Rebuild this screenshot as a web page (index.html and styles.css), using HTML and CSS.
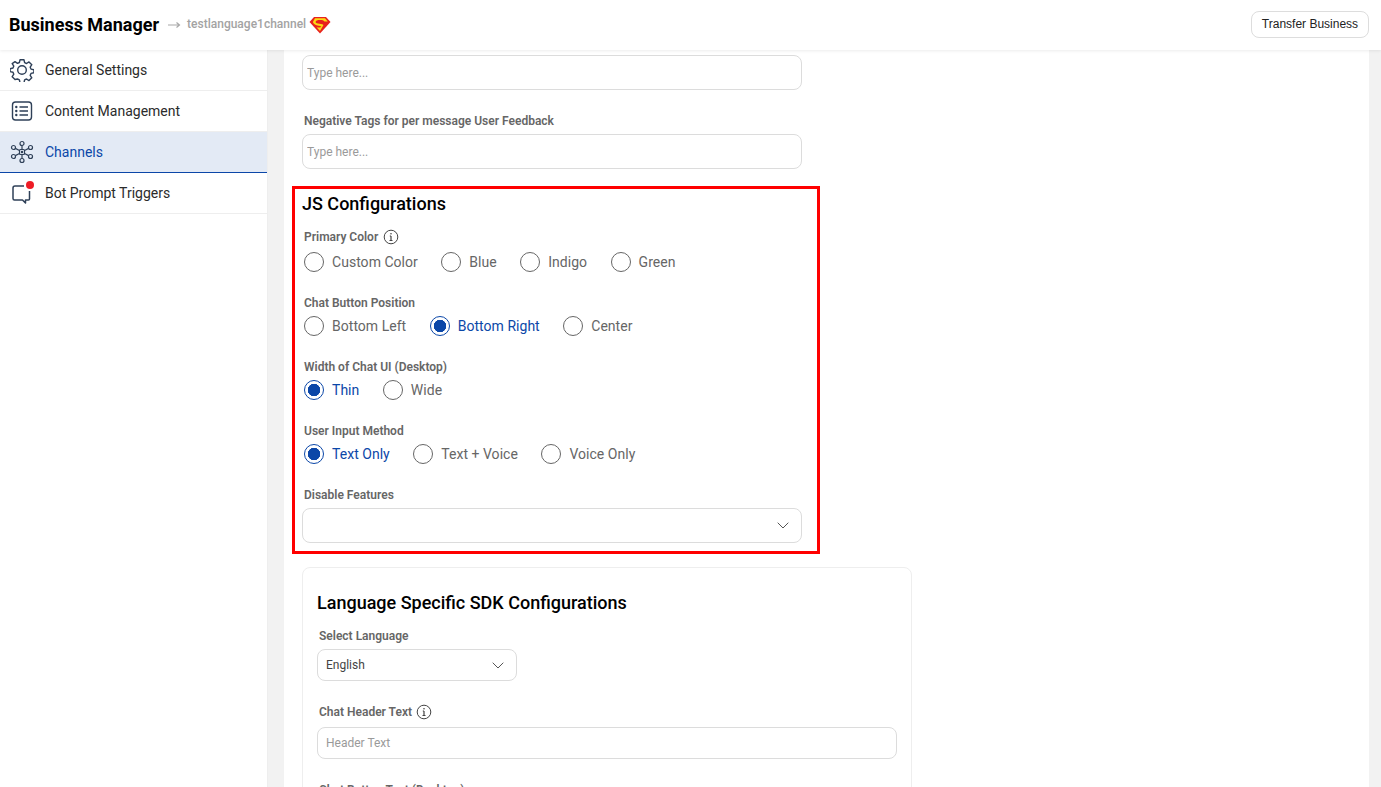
FILE: index.html
```html
<!DOCTYPE html>
<html lang="en">
<head>
    <meta charset="UTF-8">
    <meta name="viewport" content="width=device-width, initial-scale=1.0">
    <title>Business Manager</title>
    <link rel="stylesheet" href="styles.css">
</head>
<body>
    <header class="topbar">
        <div class="crumbs">
            <h1>Business Manager</h1>
            <svg class="arrow" width="14" height="8" viewBox="0 0 14 8" fill="none" stroke="#a8a8a8" stroke-width="1.2"><path d="M1 4h11.5M9.5 1.5 12.5 4l-3 2.5"/></svg>
            <span class="crumb-name">testlanguage1channel</span>
            <svg class="logo" width="22" height="18" viewBox="0 0 22 18">
                <path d="M5 1h12l4.5 5L11 17.5.5 6z" fill="#e8211d"/>
                <path d="M6 2.2h10l2.8 3.2h-3.4c-.8-1-2-1.4-4.400-1.400-2.400 0-4.400.5-4.400 1.900 0 2.600 7.800 1 7.800 3.300L11 15 7.500 11.200c1.700.5 4.500.6 4.800-.4.300-1.100-7.700-1-8.400-4.800z" fill="#fbd914"/>
            </svg>
        </div>
        <button class="transfer" type="button">Transfer Business</button>
    </header>

    <div class="layout">
        <nav class="sidebar">
            <a class="nav-item">
                <svg width="24" height="24" viewBox="0 0 24 24" fill="none" stroke="#2f4058" stroke-width="1.4" stroke-linejoin="round"><path d="M10 1.800h4l.6 2.900 1.900.8 2.500-1.600 2.800 2.800-1.600 2.500.8 1.900 2.900.7v2.900l-2.900.7-.8 1.900 1.600 2.500-2.800 2.800-2.500-1.600-1.900.8-.6 2.900h-4l-.6-2.900-1.900-.8L5 21.500l-2.800-2.800 1.600-2.500-.8-1.900-2.900-.7v-2.900l2.900-.7.8-1.900-1.600-2.500L5 3.700l2.500 1.600 1.900-.8z"/><circle cx="12" cy="12" r="4.300"/></svg>
                <span>General Settings</span>
            </a>
            <a class="nav-item">
                <svg width="24" height="24" viewBox="0 0 24 24" fill="none" stroke="#2f4058" stroke-width="1.400"><rect x="2.500" y="3" width="19" height="18" rx="3"/><path d="M9.500 8h8.500M9.500 12h8.500M9.500 16h8.500"/><g fill="#2f4058" stroke="none"><circle cx="6.300" cy="8" r="1.200"/><circle cx="6.300" cy="12" r="1.200"/><circle cx="6.300" cy="16" r="1.200"/></g></svg>
                <span>Content Management</span>
            </a>
            <a class="nav-item active">
                <svg width="24" height="24" viewBox="0 0 24 24" fill="none" stroke="#2f4058" stroke-width="1.200"><rect x="9.500" y="9.500" width="5" height="5" rx="1"/><circle cx="12" cy="12" r=".6" fill="#2f4058"/><circle cx="12" cy="3.500" r="2"/><circle cx="12" cy="20.500" r="2"/><circle cx="3.500" cy="7.500" r="2"/><circle cx="20.500" cy="7.500" r="2"/><circle cx="3.500" cy="16.500" r="2"/><circle cx="20.500" cy="16.500" r="2"/><path d="M12 5.500v4M12 14.500v4M5.300 8.400l4.200 2.100M18.700 8.400l-4.200 2.100M5.300 15.600l4.200-2.100M18.700 15.600l-4.200-2.100"/></svg>
                <span>Channels</span>
            </a>
            <a class="nav-item">
                <span class="bot-icon">
                    <svg width="24" height="24" viewBox="0 0 24 24" fill="none" stroke="#2f4058" stroke-width="1.500" stroke-linejoin="round"><path d="M14 5H5a2 2 0 0 0-2 2v10.500a1.500 1.500 0 0 0 1.500 1.500h8l3 3v-3h3a1 1 0 0 0 1-1V10"/></svg>
                    <i class="dot"></i>
                </span>
                <span>Bot Prompt Triggers</span>
            </a>
        </nav>

        <main class="content">
            <div class="panel">
                <input class="field first" type="text" placeholder="Type here...">
                <div class="group tags">
                    <label class="lbl">Negative Tags for per message User Feedback</label>
                    <input class="field" type="text" placeholder="Type here...">
                </div>

                <section class="js-box">
                    <h2>JS Configurations</h2>

                    <div class="lbl with-info first-lbl">Primary Color
                        <svg class="info" width="16" height="16" viewBox="0 0 16 16" fill="none" stroke="#444"><circle cx="8" cy="8" r="6.800"/><path d="M8 7v4.500M6.500 11.500h3M6.800 7H8" stroke-width="1.200"/><circle cx="8" cy="4.800" r=".8" fill="#444" stroke="none"/></svg>
                    </div>
                    <div class="radios">
                        <label class="radio"><input type="radio" name="color">Custom Color</label>
                        <label class="radio"><input type="radio" name="color">Blue</label>
                        <label class="radio"><input type="radio" name="color">Indigo</label>
                        <label class="radio"><input type="radio" name="color">Green</label>
                    </div>

                    <div class="lbl">Chat Button Position</div>
                    <div class="radios">
                        <label class="radio"><input type="radio" name="pos">Bottom Left</label>
                        <label class="radio on"><input type="radio" name="pos" checked>Bottom Right</label>
                        <label class="radio"><input type="radio" name="pos">Center</label>
                    </div>

                    <div class="lbl">Width of Chat UI (Desktop)</div>
                    <div class="radios">
                        <label class="radio on"><input type="radio" name="width" checked>Thin</label>
                        <label class="radio"><input type="radio" name="width">Wide</label>
                    </div>

                    <div class="lbl">User Input Method</div>
                    <div class="radios">
                        <label class="radio on"><input type="radio" name="method" checked>Text Only</label>
                        <label class="radio"><input type="radio" name="method">Text + Voice</label>
                        <label class="radio"><input type="radio" name="method">Voice Only</label>
                    </div>

                    <div class="lbl">Disable Features</div>
                    <div class="field select">
                        <svg width="12" height="7" viewBox="0 0 12 7" fill="none" stroke="#555" stroke-width="1"><path d="M.7.7 6 6l5.300-5.300"/></svg>
                    </div>
                </section>

                <section class="sdk-card">
                    <h2>Language Specific SDK Configurations</h2>
                    <div class="lbl sdk-lbl">Select Language</div>
                    <div class="lang-select">
                        <span>English</span>
                        <svg width="12" height="7" viewBox="0 0 12 7" fill="none" stroke="#555" stroke-width="1"><path d="M.7.7 6 6l5.300-5.300"/></svg>
                    </div>
                    <div class="lbl sdk-lbl with-info header-lbl">Chat Header Text
                        <svg class="info" width="16" height="16" viewBox="0 0 16 16" fill="none" stroke="#444"><circle cx="8" cy="8" r="6.800"/><path d="M8 7v4.500M6.500 11.500h3M6.800 7H8" stroke-width="1.200"/><circle cx="8" cy="4.800" r=".8" fill="#444" stroke="none"/></svg>
                    </div>
                    <input class="field sdk-input" type="text" placeholder="Header Text">
                    <div class="lbl sdk-lbl button-lbl">Chat Button Text (Desktop)</div>
                </section>
            </div>
        </main>
    </div>
</body>
</html>
```

FILE: styles.css
```css
* {
    box-sizing: border-box;
}

html, body {
    height: 100%;
}

body {
    margin: 0;
    font-family: Roboto, "Liberation Sans", sans-serif;
    color: #333333;
    background-color: #ffffff;
    overflow: hidden;
}

/* Barra superior */
.topbar {
    height: 50px;
    display: flex;
    align-items: center;
    justify-content: space-between;
    padding: 0 12px 2px 9px;
    background-color: #ffffff;
    box-shadow: 0 1px 3px rgba(0, 0, 0, 0.08);
    position: relative;
    z-index: 2;
}

.crumbs {
    display: flex;
    align-items: center;
}

.crumbs h1 {
    margin: 0;
    font-size: 18px;
    font-weight: 700;
    color: #000000;
}

.arrow {
    margin: 2px 0 0 8px;
}

.crumb-name {
    margin-left: 6px;
    font-size: 12px;
    font-weight: 500;
    color: #a3a3a3;
}

.logo {
    margin: 2px 0 0 3px;
}

.transfer {
    height: 27px;
    width: 118px;
    padding: 0;
    font-family: "Liberation Sans", Arial, sans-serif;
    font-size: 12px;
    color: #222222;
    background-color: #ffffff;
    border: 1px solid #dddddd;
    border-radius: 8px;
}

.layout {
    display: flex;
    height: calc(100% - 50px);
}

/* Menu lateral */
.sidebar {
    width: 268px;
    flex-shrink: 0;
    background-color: #ffffff;
    border-right: 1px solid #eeeeee;
}

.nav-item {
    height: 41px;
    display: flex;
    align-items: center;
    gap: 11px;
    padding-left: 10px;
    font-size: 14px;
    color: #2b2b2b;
    border-bottom: 1px solid #eeeeee;
}

.nav-item.active {
    color: #0b47a8;
    background-color: #e3eaf5;
    border-bottom-color: #0b47a8;
}

.bot-icon {
    position: relative;
    width: 24px;
    height: 24px;
}

.dot {
    position: absolute;
    top: 0;
    right: 0;
    width: 8px;
    height: 8px;
    border-radius: 50%;
    background-color: #ee1c25;
}

/* Contenido */
.content {
    flex: 1;
    padding: 0 12px 0 16px;
    background-color: #f2f2f2;
    overflow: hidden;
}

.panel {
    height: 100%;
    padding: 5px 18px 0;
    background-color: #ffffff;
}

.lbl {
    font-size: 12px;
    font-weight: 600;
    line-height: 14px;
    color: #666666;
    margin-left: 2px;
}

.field {
    display: block;
    width: 500px;
    height: 35px;
    padding: 0 4px;
    font-family: Roboto, sans-serif;
    font-size: 12px;
    background-color: #ffffff;
    border: 1px solid #dcdcdc;
    border-radius: 8px;
}

.field::placeholder {
    color: #9a9a9a;
    opacity: 1;
}

.tags {
    margin-top: 24px;
}

.tags .lbl {
    display: block;
    margin-bottom: 6px;
}

/* Recuadro JS */
.js-box {
    width: 528px;
    height: 368px;
    margin: 17px 0 0 -10px;
    padding: 4px 7px 0;
    border: 3px solid #ff0000;
}

.js-box h2, .sdk-card h2 {
    margin: 0;
    font-size: 18px;
    font-weight: 500;
    line-height: 22px;
    color: #000000;
}

.js-box h2 + .lbl {
    margin-top: 14px;
}

.with-info {
    display: flex;
    align-items: center;
    gap: 5px;
    height: 16px;
}

.first-lbl {
    margin-bottom: 7px;
}

.radios {
    display: flex;
    gap: 23.5px;
    height: 20px;
    margin: 6px 0 24px 2px;
}

.radio {
    display: flex;
    align-items: center;
    gap: 8px;
    font-size: 14px;
    letter-spacing: 0.03px;
    color: #666666;
}

.radio.on {
    color: #0b47a8;
}

.radio input {
    appearance: none;
    width: 20px;
    height: 20px;
    margin: 0;
    border: 1px solid #666666;
    border-radius: 50%;
    background-color: #ffffff;
}

.radio input:checked {
    border-color: #0b47a8;
    background: radial-gradient(circle, #0b47a8 0 6px, #ffffff 6.500px);
}

.select {
    display: flex;
    align-items: center;
    justify-content: flex-end;
    margin-top: 6px;
    padding-right: 12px;
}

/* Tarjeta SDK */
.sdk-card {
    width: 610px;
    height: 400px;
    margin-top: 13px;
    padding: 24px 14px 0;
    border: 1px solid #eeeeee;
    border-radius: 8px;
}

.sdk-lbl {
    margin-left: 2px;
}

.sdk-card h2 + .lbl {
    margin-top: 15px;
}

.lang-select {
    width: 200px;
    height: 32px;
    margin-top: 6px;
    padding: 0 12px 0 8px;
    display: flex;
    align-items: center;
    justify-content: space-between;
    font-size: 12px;
    color: #444444;
    border: 1px solid #dcdcdc;
    border-radius: 8px;
}

.header-lbl {
    margin-top: 23px;
    gap: 4px;
}

.sdk-input {
    width: 580px;
    height: 32px;
    margin-top: 7px;
    padding: 0 8px;
}

.button-lbl {
    margin-top: 24px;
}
```
